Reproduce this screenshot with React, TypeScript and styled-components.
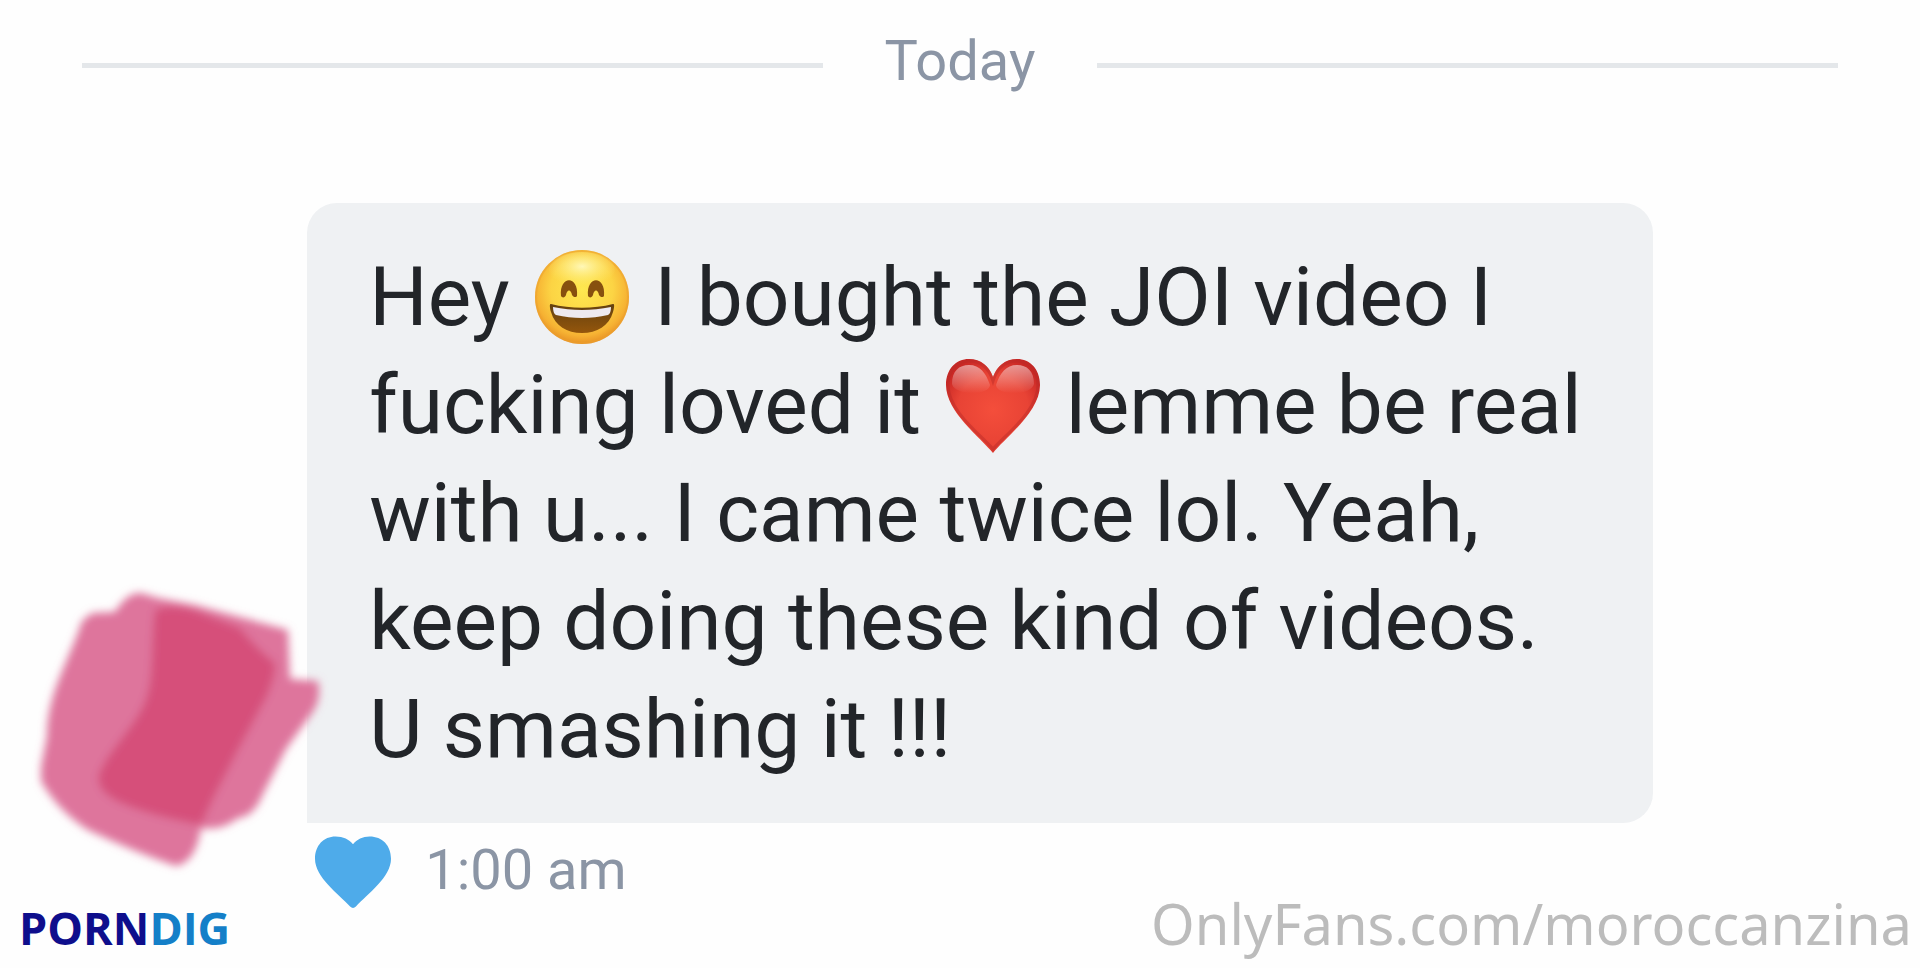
import React from "react";
import styled, { createGlobalStyle } from "styled-components";

const GlobalStyle = createGlobalStyle`
  * { box-sizing: border-box; }
  body { margin: 0; background: #fefefe; font-family: Roboto, "Liberation Sans", sans-serif; }
`;

const Page = styled.main`
  position: relative;
  min-height: 100vh;
  display: flex;
  flex-direction: column;
  overflow-x: hidden;
`;

const DayDivider = styled.header`
  display: flex;
  align-items: center;
  gap: 62px;
  padding: 27px 82px 0;
  color: #8b95a5;
  font-size: 56px;
  line-height: 68px;
`;

const Rule = styled.span`
  flex: 1;
  height: 5px;
  margin-top: 8px;
  background: #e4e7ea;
`;

const Message = styled.article`
  position: relative;
  margin-top: 108px;
  padding: 0 13.9% 0 16%;
`;

const Bubble = styled.p`
  margin: 0;
  padding: 40px 62px;
  border-radius: 30px 30px 30px 0;
  background: #eff1f3;
  color: #222529;
  font-size: 82px;
  line-height: 108px;
`;

const Line = styled.span`
  display: block;
  white-space: nowrap;
`;

const Emoji = styled.svg`
  width: 96px;
  height: 96px;
  margin: 0 4px;
  vertical-align: -21px;
`;

const Scribble = styled.svg`
  position: absolute;
  left: 30px;
  bottom: 34px;
  width: 300px;
  height: 300px;
`;

const Meta = styled.footer`
  display: flex;
  align-items: flex-start;
  gap: 34px;
  padding-left: 8px;
  margin-top: 12px;
  color: #8b95a5;
  font-size: 56px;
  line-height: 70px;
`;

const LikeButton = styled.button`
  display: flex;
  padding: 0;
  border: 0;
  background: none;
`;

const Marks = styled.div`
  position: absolute;
  inset: auto 0 0;
  display: flex;
  justify-content: space-between;
  align-items: baseline;
  padding: 0 8px 2px 19px;
  line-height: 76px;
  font-family: "Noto Sans", "Open Sans", sans-serif;
`;

const Brand = styled.strong`
  color: #0e0e8c;
  font-family: "Open Sans", sans-serif;
  font-size: 45px;
  font-weight: 700;
  span { color: #147fc8; }
`;

const Credit = styled.span`
  color: #bcbcbc;
  font-size: 56px;
`;

function Grin() {
  return (
    <Emoji viewBox="0 0 96 96" role="img" aria-label="Grinning face">
      <defs>
        <radialGradient id="face" cx="50%" cy="42%" r="60%">
          <stop offset="0" stopColor="#ffe850" />
          <stop offset=".55" stopColor="#fcd444" />
          <stop offset=".82" stopColor="#f6b233" />
          <stop offset="1" stopColor="#e58b22" />
        </radialGradient>
        <radialGradient id="shine" cx="50%" cy="40%" r="55%">
          <stop offset="0" stopColor="#fffbc4" stopOpacity=".9" />
          <stop offset="1" stopColor="#fff07a" stopOpacity="0" />
        </radialGradient>
        <linearGradient id="mouth" x1="0" y1="0" x2="0" y2="1">
          <stop offset="0" stopColor="#63400f" />
          <stop offset="1" stopColor="#94560c" />
        </linearGradient>
      </defs>
      <circle cx="48" cy="47" r="47" fill="url(#face)" />
      <circle cx="48" cy="47" r="46" fill="none" stroke="#eba02d" strokeOpacity=".5" strokeWidth="2" />
      <ellipse cx="48" cy="20" rx="33" ry="18" fill="url(#shine)" />
      <path d="M27 46C25 25 45 25 43 46C42 48 39 47 38 45C37 39 33 39 32 45C31 48 28 48 27 46ZM54 46C52 25 72 25 70 46C69 48 66 47 65 45C64 39 60 39 59 45C58 48 55 48 54 46Z" fill="#87500f" />
      <path d="M17 54C37 59 59 59 79 54C81 53 80 59 79 62C75 76 63 83 48 83S21 76 17 62C16 59 15 53 17 54Z" fill="url(#mouth)" />
      <path d="M19 57C39 61 57 61 77 57C77 61 76 64 74 65C57 69 39 69 22 65C20 64 19 61 19 57Z" fill="#eeeaf0" />
    </Emoji>
  );
}

function RedHeart() {
  return (
    <Emoji viewBox="0 0 96 96" role="img" aria-label="Red heart">
      <defs>
        <radialGradient id="red" cx="50%" cy="54%" r="58%">
          <stop offset="0" stopColor="#f44e3b" />
          <stop offset=".65" stopColor="#e84335" />
          <stop offset="1" stopColor="#c92825" />
        </radialGradient>
        <linearGradient id="gloss" x1="0" y1="0" x2="0" y2="1">
          <stop offset="0" stopColor="#fff" stopOpacity=".5" />
          <stop offset="1" stopColor="#fff" stopOpacity="0" />
        </linearGradient>
      </defs>
      <path d="M48 95C36 80 1 54 1 27C1 11 11 1 24 1C36 1 44 8 48 19C52 8 60 1 72 1C85 1 95 11 95 27C95 54 60 80 48 95Z" fill="url(#red)" />
      <path d="M48 91C36 77 3 53 3 27C3 12 12 3 24 3C36 3 44 10 48 23C52 10 60 3 72 3C84 3 93 12 93 27C93 53 60 77 48 91Z" fill="none" stroke="#b92b28" strokeOpacity=".45" strokeWidth="3" />
      <path d="M7 26C7 13 14 7 24 7C35 7 41 15 45 27C44 38 10 38 7 26ZM51 27C55 15 61 7 72 7C82 7 89 13 89 26C86 38 52 38 51 27Z" fill="url(#gloss)" />
    </Emoji>
  );
}

export default function App() {
  return (
    <>
      <GlobalStyle />
      <Page>
        <DayDivider>
          <Rule />
          <time>Today</time>
          <Rule />
        </DayDivider>
        <Message>
          <Bubble>
            <Line>Hey <Grin /> I bought the JOI video I</Line>
            <Line>fucking loved it <RedHeart /> lemme be real</Line>
            <Line>with u... I came twice lol. Yeah,</Line>
            <Line>keep doing these kind of videos.</Line>
            <Line>U smashing it !!!</Line>
          </Bubble>
          <Meta>
            <LikeButton type="button" aria-label="Like">
              <svg width="76" height="75" viewBox="0 0 78 76" aria-hidden="true">
                <path d="M36 73C24 60 0 43 0 24C0 10 9 1 21 1C29 1 35 4 39 9C43 4 49 1 56 1C69 1 78 10 78 24C78 43 54 60 42 73Q39 76 36 73Z" fill="#4eabea" />
              </svg>
            </LikeButton>
            <time>1:00 am</time>
          </Meta>
          <Scribble viewBox="30 575 300 300" aria-hidden="true">
            <defs>
              <filter id="soft" x="-10%" y="-10%" width="120%" height="120%">
                <feGaussianBlur stdDeviation="4" />
              </filter>
            </defs>
            <g filter="url(#soft)">
              <path d="M92 612L115 611Q127 591 141 592L158 597L195 604L288 629L290 678L318 680Q322 698 312 712L286 748L262 795Q254 815 238 817Q222 830 201 827Q196 861 176 865Q137 852 88 829Q58 810 41 780L41 766L47 735C47 692 69 660 82 620Z" fill="#de749c" />
              <path d="M155 609Q171 602 194 609L240 627Q257 648 275 662Q276 674 267 695L237 751L214 796L201 824Q151 815 121 802Q95 790 99 773C109 748 139 722 147 695C154 674 151 639 155 609Z" fill="#d6507a" />
            </g>
          </Scribble>
        </Message>
        <Marks>
          <Brand>PORN<span>DIG</span></Brand>
          <Credit>OnlyFans.com/moroccanzina</Credit>
        </Marks>
      </Page>
    </>
  );
}
